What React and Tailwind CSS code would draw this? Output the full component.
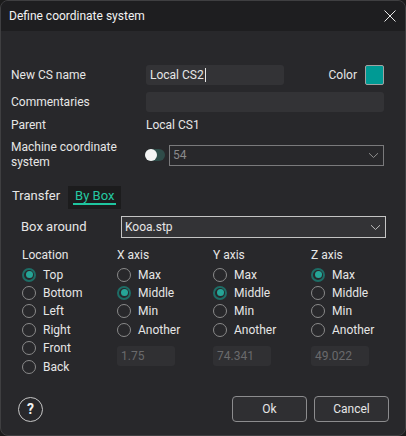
import React from "react";

function Chevron({ color = "#9a9a9a" }) {
  return (
    <svg width="11" height="7" viewBox="0 0 11 7" fill="none">
      <path d="M1 1.2 L5.5 5.5 L10 1.2" stroke={color} strokeWidth="1" />
    </svg>
  );
}

function Radio({ checked, label }) {
  return (
    <div className="flex h-[18.4px] items-center">
      {checked ? (
        <span className="flex h-[14px] w-[14px] items-center justify-center rounded-full border-[2px] border-[#1d6d66]">
          <span className="h-[7px] w-[7px] rounded-full bg-[#26a597]" />
        </span>
      ) : (
        <span className="h-[14px] w-[14px] rounded-full border-[1.5px] border-[#8a8a8a]" />
      )}
      <span className="ml-[7px]">{label}</span>
    </div>
  );
}

function AxisGroup({ title, selected, value }) {
  const opts = ["Max", "Middle", "Min", "Another"];
  return (
    <div className="flex flex-col">
      <div className="flex h-[19.4px] items-center pb-[1px]">{title}</div>
      {opts.map((o) => (
        <Radio key={o} label={o} checked={o === selected} />
      ))}
      <div className="mt-[7px] flex h-[20px] w-[58px] items-center rounded-[3px] bg-[#303033] px-[4px] text-[#6a6a6c]">
        {value}
      </div>
    </div>
  );
}

export default function App() {
  return (
    <div className="h-[436px] w-[406px] bg-[#1b1b1b] font-['Roboto',sans-serif] text-[12px] text-[#e6e6e6]">
      <div className="flex h-full flex-col overflow-hidden rounded-[8px] border border-[#3f3f41] bg-[#28282b]">
        {/* title bar */}
        <div className="flex h-[30px] shrink-0 items-center justify-between bg-[#1e1e20] pl-[8px] pr-[9px]">
          <span className="text-[12px] text-[#f2f2f2]">Define coordinate system</span>
          <svg width="12" height="12" viewBox="0 0 12 12">
            <path d="M0.5 0.5 L11.5 11.5 M11.5 0.5 L0.5 11.5" stroke="#e8e8e8" strokeWidth="1" />
          </svg>
        </div>

        {/* form */}
        <div className="flex flex-col pl-[10px] pr-[21px] pt-[34px]">
          <div className="flex h-[20px] items-center">
            <span className="w-[135px]">New CS name</span>
            <div className="flex h-[20px] w-[138px] items-center rounded-[3px] bg-[#333336] px-[4px]">
              Local CS2<span className="ml-[1px] h-[14px] w-[1px] bg-[#e6e6e6]" />
            </div>
            <span className="ml-auto">Color</span>
            <span className="ml-[8px] h-[20px] w-[19px] rounded-[2px] border border-[#a2a2a2] bg-[#009a94]" />
          </div>

          <div className="mt-[7px] flex h-[20px] items-center">
            <span className="w-[135px]">Commentaries</span>
            <div className="h-[20px] flex-1 rounded-[3px] bg-[#333336]" />
          </div>

          <div className="mt-[3px] flex h-[20px] items-center">
            <span className="w-[135px]">Parent</span>
            <span>Local CS1</span>
          </div>

          <div className="mt-[5px] flex h-[30px] items-center">
            <span className="w-[134px] leading-[15px]">
              Machine coordinate
              <br />
              system
            </span>
            <span className="flex h-[12px] w-[20px] items-center rounded-full bg-[#2f4c49]">
              <span className="h-[12px] w-[12px] rounded-full bg-[#f4f4f4]" />
            </span>
            <div className="ml-[4px] flex h-[21px] flex-1 items-center justify-between border border-[#7a7a7c] pl-[3px] pr-[4px] text-[#8a8a8c]">
              <span>54</span>
              <Chevron color="#8e8e8e" />
            </div>
          </div>

          {/* tabs */}
          <div className="mt-[16px] flex h-[23px] items-start">
            <span className="pl-[1px] pt-[2px] text-[13px] leading-[15px]">Transfer</span>
            <div className="ml-[8px] flex h-[23px] items-start bg-[#1c1c1d] px-[5px] pt-[2px]">
              <span className="border-b-2 border-[#1fc6a0] px-[2px] text-[13px] leading-[15px] text-[#25c9a2]">
                By Box
              </span>
            </div>
          </div>

          <div className="mr-[-2px] mt-[7px] flex h-[22px] items-center pl-[10px]">
            <span className="w-[100px] text-[13px]">Box around</span>
            <div className="flex h-[22px] flex-1 items-center justify-between border border-[#c4c4c4] bg-[#333336] pl-[3px] pr-[4px]">
              <span>Kooa.stp</span>
              <Chevron color="#bdbdbd" />
            </div>
          </div>

          {/* location and axis choices */}
          <div className="mt-[8px] grid grid-cols-[95px_96px_98px_1fr] pl-[11px]">
            <div className="flex flex-col">
              <div className="flex h-[19.4px] items-center pb-[1px]">Location</div>
              <Radio label="Top" checked />
              <Radio label="Bottom" />
              <Radio label="Left" />
              <Radio label="Right" />
              <Radio label="Front" />
              <Radio label="Back" />
            </div>
            <AxisGroup title="X axis" selected="Middle" value="1.75" />
            <AxisGroup title="Y axis" selected="Middle" value="74.341" />
            <AxisGroup title="Z axis" selected="Max" value="49.022" />
          </div>
        </div>

        {/* footer */}
        <div className="mt-auto flex items-center justify-between pb-[13px] pl-[17px] pr-[16px]">
          <span className="flex h-[25px] w-[25px] items-center justify-center rounded-full border-[1.5px] border-[#c6c6c6] text-[14px] font-bold text-[#f2f2f2]">
            ?
          </span>
          <div className="flex gap-[7px]">
            <button className="h-[26px] w-[75px] rounded-[4px] border border-[#8c8c8e] bg-[#2f2f32] text-[12px] text-[#e6e6e6]">
              Ok
            </button>
            <button className="h-[26px] w-[75px] rounded-[4px] border border-[#8c8c8e] bg-[#2f2f32] text-[12px] text-[#e6e6e6]">
              Cancel
            </button>
          </div>
        </div>
      </div>
    </div>
  );
}
